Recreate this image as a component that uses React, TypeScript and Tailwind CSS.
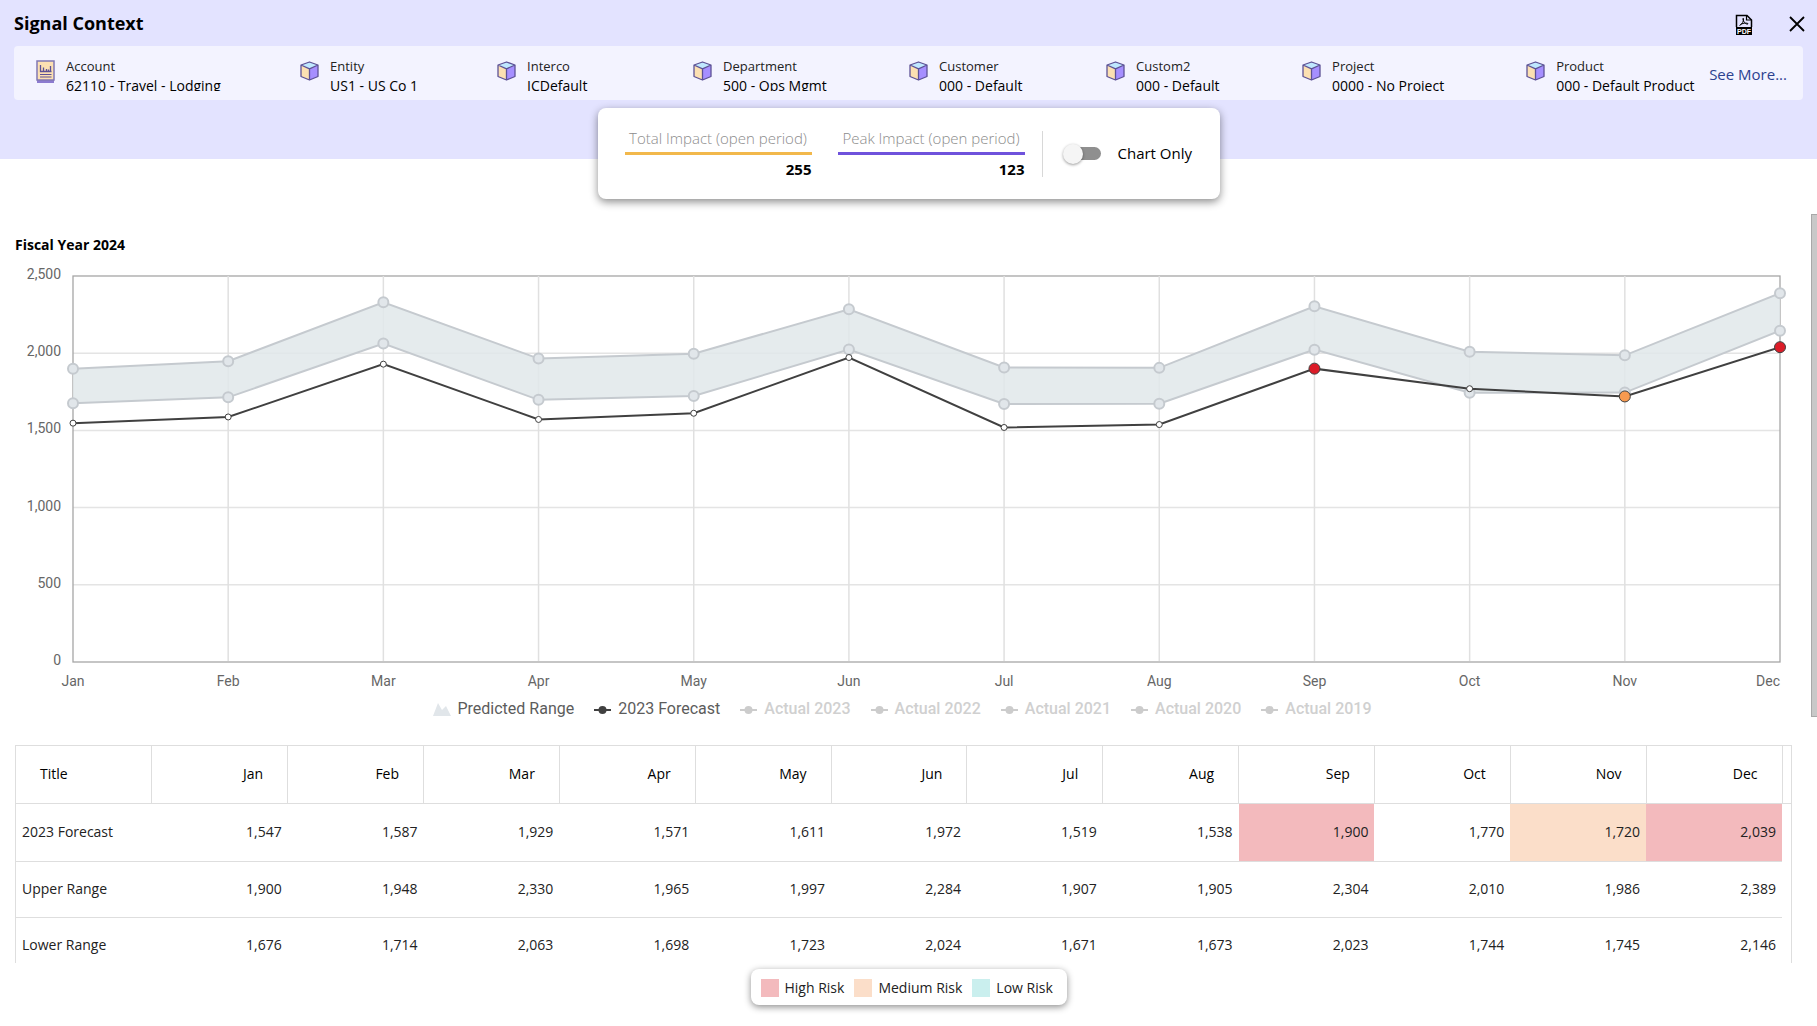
import { useState } from "react";

const months = ["Jan", "Feb", "Mar", "Apr", "May", "Jun", "Jul", "Aug", "Sep", "Oct", "Nov", "Dec"];
const forecast = [1547, 1587, 1929, 1571, 1611, 1972, 1519, 1538, 1900, 1770, 1720, 2039];
const upper = [1900, 1948, 2330, 1965, 1997, 2284, 1907, 1905, 2304, 2010, 1986, 2389];
const lower = [1676, 1714, 2063, 1698, 1723, 2024, 1671, 1673, 2023, 1744, 1745, 2146];

type Risk = "high" | "medium";
const risks: Record<number, Risk> = { 8: "high", 10: "medium", 11: "high" };
const riskFill: Record<Risk, string> = { high: "#dc1c28", medium: "#f79a50" };
const riskCell: Record<Risk, string> = { high: "bg-[#f3babd]", medium: "bg-[#fbdec9]" };

const dimensions = [
  { label: "Account", value: "62110 - Travel - Lodging" },
  { label: "Entity", value: "US1 - US Co 1" },
  { label: "Interco", value: "ICDefault" },
  { label: "Department", value: "500 - Ops Mgmt" },
  { label: "Customer", value: "000 - Default" },
  { label: "Custom2", value: "000 - Default" },
  { label: "Project", value: "0000 - No Project" },
  { label: "Product", value: "000 - Default Product" },
];

const fmt = (n: number) => n.toLocaleString("en-US");

function CubeIcon() {
  return (
    <svg width="20" height="24" viewBox="0 0 20 24" className="shrink-0" aria-hidden="true">
      <path d="M9.5 2 18 5 9.5 8.8 1 5Z" fill="#bfe8ff" />
      <path d="M1 5 9.5 8.8V20L1 16.5Z" fill="#fce0b2" />
      <path d="M18 5 9.5 8.8V20L18 16.5Z" fill="#a68fff" />
      <path d="M9.5 2 18 5V16.5L9.5 20 1 16.5V5ZM1 5 9.5 8.8 18 5M9.5 8.8V20" fill="none" stroke="#5d5296" strokeWidth="1.3" strokeLinejoin="round" />
    </svg>
  );
}

function LedgerIcon() {
  return (
    <svg width="20" height="24" viewBox="0 0 20 24" className="shrink-0" aria-hidden="true">
      <path d="M1 20H18V23H1Z" fill="#8c7bd0" />
      <rect x="1" y="1" width="17" height="19" fill="#fce0b2" stroke="#8178b4" strokeWidth="1.5" />
      <path d="M4.5 5V11.5H15.5M7.5 11V7.5M10.5 11V9M12.5 11V9.5M14.5 11V6" fill="none" stroke="#5d5296" strokeWidth="1.3" />
      <path d="M4 14.5H15.5M4 17H15.5" stroke="#5d5296" strokeWidth="1" />
    </svg>
  );
}

function PdfIcon() {
  return (
    <svg width="18" height="21" viewBox="0 0 18 21" aria-hidden="true">
      <path d="M1.5 13V1.5H12L16.5 6V13" fill="none" stroke="#000" strokeWidth="1.5" />
      <path d="M11.5 1.5V6H16.5" fill="none" stroke="#000" strokeWidth="1.2" />
      <path d="M4.5 11.5C7 10.5 9 7 8.5 4.5C8 3.5 7.5 5 8.5 7C9.5 9 11.5 10.5 13 10C13.5 9 9 8.5 5.5 10.5" fill="none" stroke="#000" strokeWidth="1" />
      <rect x="1" y="13" width="16" height="8" fill="#000" />
      <text x="9" y="19.5" textAnchor="middle" fontSize="7" fontWeight="700" fill="#fff" fontFamily="Liberation Sans, sans-serif">PDF</text>
    </svg>
  );
}

const LEFT = 73;
const RIGHT = 1780;
const TOP = 15;
const BOTTOM = 401;
const px = (i: number) => LEFT + ((RIGHT - LEFT) * i) / 11;
const py = (v: number) => BOTTOM - ((BOTTOM - TOP) * v) / 2500;
const points = (values: number[]) => values.map((v, i) => `${px(i)},${py(v)}`);

function Chart() {
  return (
    <svg viewBox="0 0 1811 430" className="block h-auto w-full font-[Roboto,sans-serif]" role="img" aria-label="Forecast against predicted range">
      {[500, 1000, 1500, 2000].map((v) => (
        <line key={v} x1={LEFT} x2={RIGHT} y1={py(v)} y2={py(v)} stroke="#e4e4e4" strokeWidth="1.5" />
      ))}
      <rect x={LEFT} y={TOP} width={RIGHT - LEFT} height={BOTTOM - TOP} fill="none" stroke="#a6a6a6" strokeWidth="1.3" />
      {months.slice(1, 11).map((m, i) => (
        <line key={m} x1={px(i + 1)} x2={px(i + 1)} y1={TOP} y2={BOTTOM - 1} stroke="#e0e0e0" strokeWidth="1.5" />
      ))}
      <polygon points={[...points(upper), ...points(lower).reverse()].join(" ")} fill="#e1e7ea" fillOpacity="0.85" />
      {[upper, lower].map((series, s) => (
        <g key={s} stroke="#c5cacf" strokeWidth="2" fill="#e1e6ea">
          <polyline points={points(series).join(" ")} fill="none" />
          {series.map((v, i) => (
            <circle key={i} cx={px(i)} cy={py(v)} r="5" />
          ))}
        </g>
      ))}
      <polyline points={points(forecast).join(" ")} fill="none" stroke="#404040" strokeWidth="2" />
      {forecast.map((v, i) => (
        <circle key={i} cx={px(i)} cy={py(v)} r={risks[i] ? 5.5 : 3} fill={risks[i] ? riskFill[risks[i]] : "#fff"} stroke="#404040" strokeWidth="1" />
      ))}
      <g fontSize="14" fill="#666">
        {[0, 500, 1000, 1500, 2000, 2500].map((v) => (
          <text key={v} x="61" y={py(v) + 3} textAnchor="end">{fmt(v)}</text>
        ))}
        {months.map((m, i) => (
          <text key={m} x={px(i)} y="425" textAnchor={i === 11 ? "end" : "middle"}>{m}</text>
        ))}
      </g>
    </svg>
  );
}

function SeriesKey({ label, state }: { label: string; state: "area" | "on" | "off" }) {
  return (
    <button type="button" className={`flex items-center gap-1.5 text-base leading-5 ${state === "off" ? "font-medium text-[#d0d0d0]" : "text-[#5c5c5c]"}`}>
      <svg width="18" height="14" viewBox="0 0 18 14" aria-hidden="true">
        {state === "area" ? (
          <path d="M0 14 5 1 9 8 13 4 18 14Z" fill="#e1e6ea" />
        ) : (
          <g fill={state === "on" ? "#404040" : "#ccc"}>
            <rect y="7" width="17" height="2" />
            <circle cx="8.5" cy="8" r="4" />
          </g>
        )}
      </svg>
      {label}
    </button>
  );
}

function Impact({ label, value, line }: { label: string; value: string; line: string }) {
  return (
    <dl className="w-[187px] pt-0.5">
      <dt className={`border-b-3 pb-1 text-center text-[15px] leading-5 font-light whitespace-nowrap text-[#8c8c8c] ${line}`}>{label}</dt>
      <dd className="pt-0.5 text-right text-[15px] leading-6 font-bold">{value}</dd>
    </dl>
  );
}

export default function App() {
  const [chartOnly, setChartOnly] = useState(false);
  const rows = [
    { title: "2023 Forecast", values: forecast, height: "h-[58px]" },
    { title: "Upper Range", values: upper, height: "h-14" },
    { title: "Lower Range", values: lower, height: "h-14" },
  ];
  return (
    <div className="flex h-screen flex-col overflow-hidden bg-white font-['Open_Sans',sans-serif] text-black">
      <header className="shrink-0 bg-[#e3e3ff] px-3.5 pb-[59px]">
        <div className="flex h-[46px] items-center justify-between">
          <h1 className="text-lg font-bold">Signal Context</h1>
          <div className="flex items-center gap-9 pt-0.5">
            <button type="button" aria-label="Export PDF"><PdfIcon /></button>
            <button type="button" aria-label="Close" className="-mr-0.5">
              <svg width="16" height="16" viewBox="0 0 16 16" aria-hidden="true">
                <path d="M1 1 15 15M15 1 1 15" stroke="#000" strokeWidth="1.8" />
              </svg>
            </button>
          </div>
        </div>
        <div className="flex h-[54px] rounded bg-[#f3f3ff] pr-4 pl-[22px]">
          <div className="mt-[11px] grid h-[34px] flex-1 grid-cols-[264fr_197fr_196fr_216fr_197fr_196fr_224fr_183fr] overflow-hidden">
            {dimensions.map((d, i) => (
              <div key={d.label} className="flex min-w-0 gap-2.5">
                <div className="pt-[3px]">{i === 0 ? <LedgerIcon /> : <CubeIcon />}</div>
                <div className="leading-[19px] whitespace-nowrap">
                  <div className="text-[13px] text-[#222]">{d.label}</div>
                  <div className="text-[14px] font-medium">{d.value}</div>
                </div>
              </div>
            ))}
          </div>
          <a href="#more" className="self-center pt-0.5 text-[15px] font-medium whitespace-nowrap text-[#2c4190]">See More...</a>
        </div>
      </header>

      <section className="relative z-10 -mt-[51px] flex h-[91px] w-[622px] shrink-0 items-center self-center rounded-lg bg-white pl-[27px] shadow-[0_3px_8px_rgba(0,0,0,0.45)]">
        <Impact label="Total Impact (open period)" value="255" line="border-[#f2b84b]" />
        <div className="w-[26px]" />
        <Impact label="Peak Impact (open period)" value="123" line="border-[#6f52dc]" />
        <div className="mx-[17px] h-[46px] w-px bg-[#d8d8d8]" />
        <label className="flex cursor-pointer items-center gap-4 text-[15px] font-medium whitespace-nowrap">
          <span className="relative flex h-5 w-[42px] items-center">
            <input type="checkbox" role="switch" checked={chartOnly} onChange={(e) => setChartOnly(e.target.checked)} className="peer absolute inset-0 z-10 cursor-pointer opacity-0" />
            <span className="ml-1 h-[13px] w-[37px] rounded-full bg-[#8f8f8f]" />
            <span className="absolute left-[3px] size-5 rounded-full bg-[#f5f5f5] shadow-[0_1px_3px_rgba(0,0,0,0.4)] peer-checked:left-5" />
          </span>
          Chart Only
        </label>
      </section>

      <main className="mt-[15px] flex min-h-0 flex-1 overflow-hidden">
        <div className="min-w-0 flex-1">
          <h2 className="pt-[19px] pl-[15px] text-sm leading-6 font-bold">Fiscal Year 2024</h2>
          <div className="pt-1"><Chart /></div>
          <div className="flex justify-center gap-5 pt-2 pr-1.5 font-[Roboto,sans-serif]">
            <SeriesKey label="Predicted Range" state="area" />
            <SeriesKey label="2023 Forecast" state="on" />
            {[2023, 2022, 2021, 2020, 2019].map((y) => (
              <SeriesKey key={y} label={`Actual ${y}`} state="off" />
            ))}
          </div>
          {!chartOnly && (
            <div className="mt-[26px] mr-[19px] ml-[15px] border border-[#dedede]">
              <table className="w-full table-fixed border-collapse text-sm">
                <thead>
                  <tr className="h-[57px] border-b border-[#dedede]">
                    <th scope="col" className="border-r border-[#dedede] pl-6 text-left font-medium">Title</th>
                    {months.map((m) => (
                      <th key={m} scope="col" className="border-r border-[#dedede] pr-6 text-right font-medium">{m}</th>
                    ))}
                    <td className="w-[9px]" />
                  </tr>
                </thead>
                <tbody className="text-[#222]">
                  {rows.map((r, ri) => (
                    <tr key={r.title} className={r.height}>
                      <th scope="row" className="border-b border-[#dedede] pl-1.5 text-left font-normal">{r.title}</th>
                      {r.values.map((v, i) => (
                        <td key={i} className={`border-b border-[#dedede] pr-1.5 text-right ${ri === 0 && risks[i] ? riskCell[risks[i]] : ""}`}>{fmt(v)}</td>
                      ))}
                      <td />
                    </tr>
                  ))}
                </tbody>
              </table>
            </div>
          )}
        </div>
        <div className="h-[503px] w-1.5 border border-r-0 border-[#a8a8a8] bg-[#c8c8c8]" />
      </main>

      <footer className="flex shrink-0 justify-center pt-1.5 pb-[21px]">
        <ul className="flex h-9 w-[316px] items-center gap-2.5 rounded-lg bg-white pt-0.5 pl-2.5 text-sm whitespace-nowrap text-[#222] shadow-[0_2px_7px_rgba(0,0,0,0.45)]">
          <li className="flex items-center gap-1.5"><span className="size-[18px] bg-[#f3babd]" />High Risk</li>
          <li className="flex items-center gap-1.5"><span className="size-[18px] bg-[#fbdec9]" />Medium Risk</li>
          <li className="flex items-center gap-1.5"><span className="size-[18px] bg-[#caefee]" />Low Risk</li>
        </ul>
      </footer>
    </div>
  );
}
